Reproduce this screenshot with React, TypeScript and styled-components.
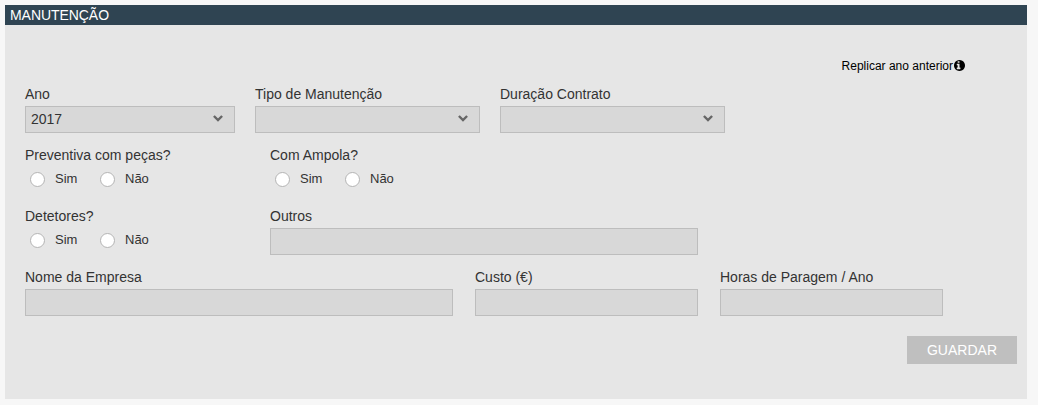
import React from 'react';
import styled, { createGlobalStyle } from 'styled-components';

const GlobalStyle = createGlobalStyle`
  *, *::before, *::after { box-sizing: border-box; }
  body {
    margin: 0;
    background: #f7f7f7;
    color: #333;
    font: 14px/20px "Liberation Sans", Arial, sans-serif;
  }
`;

const Panel = styled.section`
  width: 1022px;
  height: 394px;
  margin: 5px;
  background: #e6e6e6;
`;

const PanelTitle = styled.h2`
  margin: 0;
  height: 20px;
  padding-left: 5px;
  background: #2f4452;
  color: #fff;
  font-size: 14px;
  font-weight: 400;
  line-height: 20px;
  letter-spacing: -0.06px;
`;

const Form = styled.form`
  display: flex;
  flex-direction: column;
  padding: 31px 10px 0 20px;
`;

const ReplicateLink = styled.a`
  display: flex;
  align-items: center;
  align-self: flex-end;
  gap: 1px;
  height: 20px;
  margin: 0 52px 8px 0;
  color: #000;
  font-size: 12px;
`;

const InfoIcon = styled.svg`
  width: 11px;
  height: 11px;
  margin-bottom: 1px;
  fill: currentColor;
`;

const Row = styled.div<{ $gap: number }>`
  display: flex;
  gap: ${({ $gap }) => $gap}px;
  height: 61px;
`;

const Field = styled.div<{ $width: number }>`
  width: ${({ $width }) => $width}px;
`;

const Label = styled.label`
  display: block;
  height: 22px;
  line-height: 20px;
  white-space: nowrap;
`;

const Input = styled.input`
  display: block;
  width: 100%;
  height: 27px;
  padding: 0 5px;
  border: 1px solid #bdbdbd;
  border-radius: 0;
  background: #d8d8d8;
  color: #333;
  font: inherit;
  outline: none;
`;

const SelectBox = styled.div`
  display: flex;
  align-items: center;
  justify-content: space-between;
  height: 27px;
  padding: 0 11px 2px 5px;
  border: 1px solid #bdbdbd;
  background: #d8d8d8;
`;

const Chevron = styled.svg`
  width: 10px;
  height: 7px;
  margin-left: auto;
  fill: none;
  stroke: #666;
  stroke-width: 2.4;
`;

const Options = styled.div`
  display: flex;
  padding-left: 5px;
`;

const Option = styled.label`
  display: flex;
  align-items: flex-start;
  width: 70px;
  font-size: 13px;
  line-height: 24px;
`;

const Radio = styled.input`
  appearance: none;
  flex: none;
  width: 15px;
  height: 15px;
  margin: 5px 10px 0 0;
  border: 1px solid #b4b4b4;
  border-radius: 50%;
  background: #fff;
`;

const SaveButton = styled.button`
  align-self: flex-end;
  width: 110px;
  height: 28px;
  margin-top: 8px;
  padding: 0;
  border: 0;
  background: #bfbfbf;
  color: #fff;
  font: inherit;
`;

function SelectField({ label, width, value }: { label: string; width: number; value?: string }) {
  return (
    <Field $width={width}>
      <Label>{label}</Label>
      <SelectBox role="combobox" aria-label={label}>
        {value && <span>{value}</span>}
        <Chevron viewBox="0 0 10 7">
          <path d="M0.9 1 L5 5.1 L9.1 1" />
        </Chevron>
      </SelectBox>
    </Field>
  );
}

function TextField({ label, width, name }: { label: string; width: number; name: string }) {
  return (
    <Field $width={width}>
      <Label htmlFor={name}>{label}</Label>
      <Input id={name} name={name} type="text" />
    </Field>
  );
}

function YesNoField({ label, width, name }: { label: string; width: number; name: string }) {
  return (
    <Field $width={width}>
      <Label as="div">{label}</Label>
      <Options>
        {['Sim', 'Não'].map((option) => (
          <Option key={option}>
            <Radio type="radio" name={name} value={option} />
            {option}
          </Option>
        ))}
      </Options>
    </Field>
  );
}

export default function App() {
  return (
    <>
      <GlobalStyle />
      <Panel>
        <PanelTitle>MANUTENÇÃO</PanelTitle>
        <Form>
          <ReplicateLink>
            Replicar ano anterior
            <InfoIcon viewBox="128 128 1536 1536">
              <path d="M1024 1376v-160q0-14-9-23t-23-9h-96v-512q0-14-9-23t-23-9h-320q-14 0-23 9t-9 23v160q0 14 9 23t23 9h96v320h-96q-14 0-23 9t-9 23v160q0 14 9 23t23 9h448q14 0 23-9t9-23zM896 480v-160q0-14-9-23t-23-9h-192q-14 0-23 9t-9 23v160q0 14 9 23t23 9h192q14 0 23-9t9-23zM1664 896q0 209-103 385.5t-279.5 279.5-385.5 103-385.5-103-279.5-279.5-103-385.5 103-385.5 279.5-279.5 385.5-103 385.5 103 279.5 279.5 103 385.5z" />
            </InfoIcon>
          </ReplicateLink>
          <Row $gap={20}>
            <SelectField label="Ano" width={210} value="2017" />
            <SelectField label="Tipo de Manutenção" width={225} />
            <SelectField label="Duração Contrato" width={225} />
          </Row>
          <Row $gap={20}>
            <YesNoField label="Preventiva com peças?" width={225} name="pecas" />
            <YesNoField label="Com Ampola?" width={225} name="ampola" />
          </Row>
          <Row $gap={20}>
            <YesNoField label="Detetores?" width={225} name="detetores" />
            <TextField label="Outros" width={428} name="outros" />
          </Row>
          <Row $gap={22}>
            <TextField label="Nome da Empresa" width={428} name="empresa" />
            <TextField label="Custo (€)" width={223} name="custo" />
            <TextField label="Horas de Paragem / Ano" width={223} name="horas" />
          </Row>
          <SaveButton type="button">GUARDAR</SaveButton>
        </Form>
      </Panel>
    </>
  );
}
